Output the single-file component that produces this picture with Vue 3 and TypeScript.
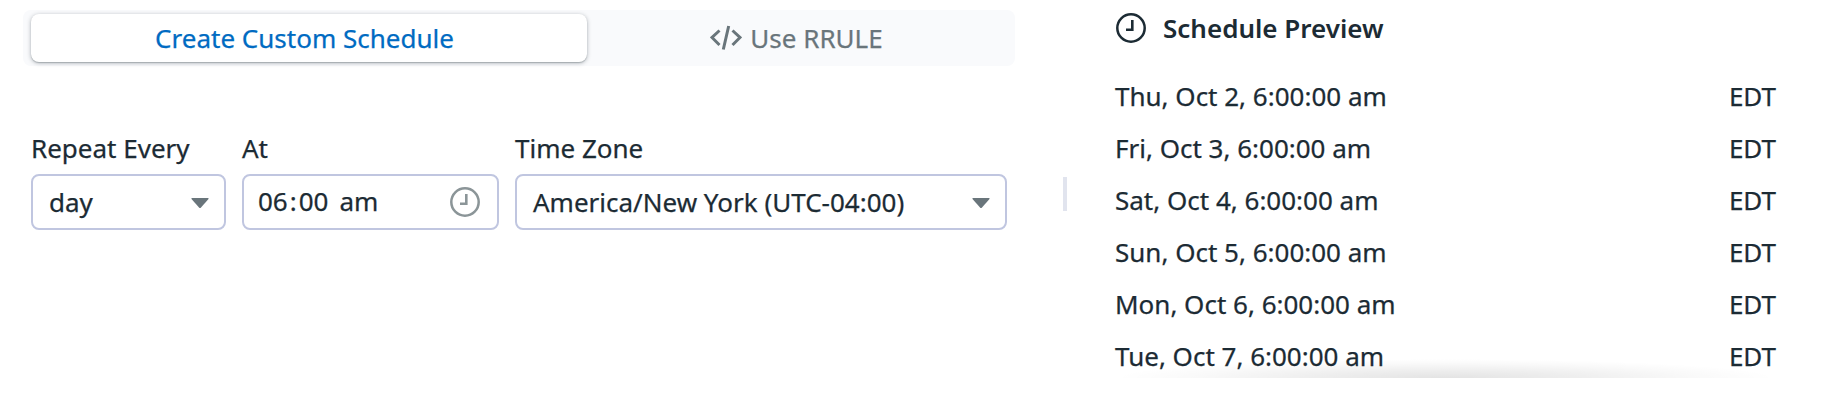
<script setup lang="ts">
interface Run {
  date: string
  zone: string
}

const runs: Run[] = [
  'Thu, Oct 2',
  'Fri, Oct 3',
  'Sat, Oct 4',
  'Sun, Oct 5',
  'Mon, Oct 6',
  'Tue, Oct 7',
].map((day) => ({ date: `${day}, 6:00:00 am`, zone: 'EDT' }))
</script>

<template>
  <main class="page">
    <section class="editor">
      <div class="tabs" role="tablist">
        <button class="tab active" role="tab">Create Custom Schedule</button>
        <button class="tab" role="tab">
          <svg class="code" viewBox="0 0 32 26" fill="none" stroke="currentColor" stroke-width="3">
            <path d="M9.5 5.5 2 12.5l7.5 7.5M22.5 5.5l7.5 7L22.500 20M18.700 1l-5.400 23.500" />
          </svg>
          <span>Use RRULE</span>
        </button>
      </div>
      <div class="fields">
        <div class="field repeat">
          <span class="label">Repeat Every</span>
          <div class="control">
            <span>day</span>
            <svg class="caret" viewBox="0 0 18 10"><path d="M1 0h16q1 0 .5 1L10 9.500q-1 1-2 0L.500 1Q0 0 1 0z" /></svg>
          </div>
        </div>
        <div class="field at">
          <span class="label">At</span>
          <div class="control time">
            <span class="clock-text"><span>06</span><span class="colon">:</span><span>00</span><span class="meridiem">am</span></span>
            <svg class="clock" viewBox="0 0 30 30" fill="none" stroke="currentColor">
              <circle cx="15" cy="15" r="13.700" stroke-width="2.500" />
              <path d="M16.300 7v9.800H10" stroke-width="2.600" />
            </svg>
          </div>
        </div>
        <div class="field zone">
          <span class="label">Time Zone</span>
          <div class="control">
            <span>America/New York (UTC-04:00)</span>
            <svg class="caret" viewBox="0 0 18 10"><path d="M1 0h16q1 0 .5 1L10 9.500q-1 1-2 0L.500 1Q0 0 1 0z" /></svg>
          </div>
        </div>
      </div>
    </section>
    <div class="divider"></div>
    <section class="preview">
      <h2 class="heading">
        <svg class="clock" viewBox="0 0 30 30" fill="none" stroke="currentColor">
          <circle cx="15" cy="15" r="13.700" stroke-width="2.500" />
          <path d="M16.300 7v9.800H10" stroke-width="2.600" />
        </svg>
        <span>Schedule Preview</span>
      </h2>
      <ul class="runs">
        <li v-for="run in runs" :key="run.date">
          <span>{{ run.date }}</span>
          <span>{{ run.zone }}</span>
        </li>
      </ul>
    </section>
  </main>
</template>

<style>
body {
  margin: 0;
  background: #fff;
}
</style>

<style scoped>
.page {
  box-sizing: border-box;
  display: flex;
  width: 1844px;
  height: 408px;
  padding-left: 23px;
  overflow: hidden;
  color: #1c2b34;
  font: 400 26px/36px 'Noto Sans', sans-serif;
  -webkit-text-stroke: 0.25px currentColor;
}
.editor {
  width: 992px;
  padding-top: 10px;
}
.tabs {
  box-sizing: border-box;
  display: flex;
  height: 56px;
  padding: 4px 10px 4px 8px;
  border-radius: 8px;
  background: #f9fafc;
}
.tab {
  display: flex;
  flex: 1;
  align-items: center;
  justify-content: center;
  gap: 8px;
  padding: 0 0 0 1px;
  border: 0;
  border-radius: 8px;
  background: none;
  color: #69757b;
  font: inherit;
}
.tab.active {
  box-sizing: border-box;
  flex: 0 0 556px;
  padding: 0 9px 0 0;
  background: #fff;
  box-shadow: 0 1px 4px rgba(28, 43, 52, 0.35), 0 1px 1px rgba(28, 43, 52, 0.2);
  color: #006bc2;
}
.code {
  width: 32px;
  height: 26px;
}
.fields {
  display: flex;
  gap: 16px;
  padding: 64px 0 0 8px;
}
.field {
  display: flex;
  flex-direction: column;
  gap: 8px;
}
.repeat {
  width: 195px;
}
.at {
  width: 257px;
}
.zone {
  width: 492px;
}
.control {
  box-sizing: border-box;
  display: flex;
  align-items: center;
  justify-content: space-between;
  height: 56px;
  padding: 0 15px 0 16px;
  border: 2px solid #c0c6e0;
  border-radius: 8px;
  background: #fff;
}
.control.time {
  padding: 0 17px 1px 14px;
}
.clock-text {
  display: flex;
  margin-top: -1px;
}
.colon {
  margin: 0 2px;
}
.meridiem {
  margin-left: 11px;
}
.caret {
  width: 18px;
  height: 10px;
  margin-top: 2px;
  fill: #69757b;
}
.clock {
  flex: none;
  width: 30px;
  height: 30px;
}
.time .clock {
  color: #8b9598;
}
.divider {
  width: 4px;
  height: 34px;
  margin: 177px 48px 0 48px;
  background: #e1e4ee;
}
.preview {
  width: 661px;
  height: 378px;
  background: radial-gradient(ellipse 50% 19px at 50% 100%, rgba(0, 0, 0, 0.11), rgba(0, 0, 0, 0.065) 40%, rgba(0, 0, 0, 0.025) 75%, transparent) no-repeat;
}
.heading {
  display: flex;
  align-items: center;
  gap: 17px;
  height: 36px;
  margin: 0;
  padding: 10px 0 24px 1px;
  font-size: 26px;
  font-weight: 600;
  -webkit-text-stroke-width: 0;
}
.runs {
  margin: 0;
  padding: 0;
  list-style: none;
}
.runs li {
  display: flex;
  justify-content: space-between;
  line-height: 52px;
}
</style>
